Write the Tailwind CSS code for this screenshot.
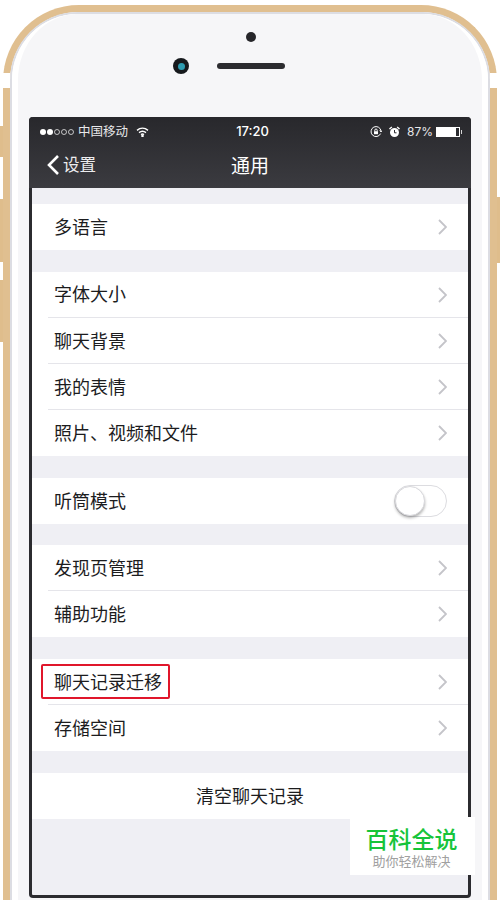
<!DOCTYPE html>
<html lang="zh-CN">
<head>
  <meta charset="UTF-8" />
  <title>通用</title>
  <script src="https://cdn.jsdelivr.net/npm/@tailwindcss/browser@4"></script>
</head>
<body class="bg-white">
<div class="relative w-[500px] h-[900px] overflow-hidden bg-white pt-[5px] px-[3px] font-['Noto_Sans_CJK_SC',sans-serif] text-[#1c1c1e]">

  <!-- side buttons -->
  <div class="absolute left-0 top-[126px] w-[3px] h-[31px] bg-[#dfbd8c]"></div>
  <div class="absolute left-0 top-[199px] w-[3px] h-[63px] bg-[#dfbd8c]"></div>
  <div class="absolute left-0 top-[280px] w-[3px] h-[62px] bg-[#dfbd8c]"></div>
  <div class="absolute right-0 top-[197px] w-[3px] h-[66px] bg-[#dfbd8c]"></div>
  <!-- antenna gaps -->
  <div class="absolute left-[3px] top-[73px] w-[7px] h-[15px] bg-white"></div>
  <div class="absolute right-[3px] top-[73px] w-[7px] h-[15px] bg-white"></div>

  <!-- phone shell -->
  <div class="h-[895px] border-[7px] border-b-0 border-[#e0bf90] rounded-t-[76px]">
    <div class="h-full border-2 border-b-0 border-[#dcdde3] rounded-t-[68px]">
      <div class="h-full border-x-[6px] border-white bg-[#f6f6f8] rounded-t-[66px] px-[11px]">

        <!-- earpiece -->
        <div class="h-[103px] pl-[2px] flex flex-col items-center">
          <div class="mt-[18px] w-[10px] h-[10px] rounded-full bg-[#26262a]"></div>
          <div class="relative mt-[21px] w-[68px] h-[6px] rounded-full bg-[#2c2c30]">
            <div class="absolute left-[-44px] top-[-5px] w-[16px] h-[16px] rounded-full bg-[#16191d] flex items-center justify-center">
              <div class="w-[7px] h-[7px] rounded-full bg-[#2d9bb0]"></div>
            </div>
          </div>
        </div>

        <!-- screen -->
        <div class="h-[781px] border-[3px] border-t-0 border-[#2b2b2f] rounded-[4px] bg-[#efeff4]">

          <!-- header -->
          <div class="h-[71px] -mx-[3px] rounded-t-[4px] bg-gradient-to-b from-[#28282c] to-[#3b3b40] text-white">
            <div class="h-[28px] pt-[1px] grid grid-cols-3 items-center pl-[11px] pr-[9px]">
              <div class="flex items-center">
                <div class="flex gap-[1px]">
                  <span class="w-[6px] h-[6px] rounded-full bg-white"></span>
                  <span class="w-[6px] h-[6px] rounded-full bg-white"></span>
                  <span class="w-[6px] h-[6px] rounded-full border border-white/70"></span>
                  <span class="w-[6px] h-[6px] rounded-full border border-white/70"></span>
                  <span class="w-[6px] h-[6px] rounded-full border border-white/70"></span>
                </div>
                <span class="ml-[4px] text-[12.5px] leading-none whitespace-nowrap text-[#e8e8ea]">中国移动</span>
                <svg class="ml-[8px] shrink-0" width="13" height="10" viewBox="0 0 13 10" fill="none" stroke="#fff" stroke-width="1.4">
                  <path d="M1 3.4C4.3.6 8.7.6 12 3.4" />
                  <path d="M3 5.6c2.1-1.7 4.9-1.7 7 0" />
                  <path d="M5 7.6c.9-.7 2.1-.7 3 0" />
                  <circle cx="6.5" cy="9" r=".6" fill="#fff" />
                </svg>
              </div>
              <div class="text-center text-[13px] leading-none font-medium pl-[3px] font-['Inter',sans-serif]">17:20</div>
              <div class="flex items-center justify-end">
                <svg width="12" height="12" viewBox="0 0 12 12" fill="none" stroke="#fff" stroke-width="1">
                  <path d="M10.6 7.6A5 5 0 1 1 11 5" />
                  <path d="M9.8 4.4 11 6l1-1.4" />
                  <rect x="4" y="5.2" width="4" height="3" fill="#fff" stroke="none" />
                  <path d="M4.8 5.2V4.2a1.2 1.2 0 0 1 2.4 0v1" />
                </svg>
                <svg class="ml-[7px]" width="11" height="12" viewBox="0 0 11 12" fill="#fff">
                  <circle cx="5.5" cy="6.5" r="4.5" />
                  <path d="M0 2.6 2.4.6l.9 1-2.4 2zM11 2.6 8.6.6l-.9 1 2.4 2z" />
                  <path d="M5.5 4v2.8h2" stroke="#2b2b2f" fill="none" />
                </svg>
                <span class="ml-[7px] text-[12px] leading-none text-[#e8e8ea] font-['Inter',sans-serif]">87%</span>
                <div class="ml-[3px] w-[24px] h-[10px] border border-white/80 bg-white flex">
                  <div class="ml-auto w-[3px] bg-[#2b2b2f]"></div>
                </div>
                <div class="w-[1px] h-[4px] ml-[1px] bg-white/80"></div>
              </div>
            </div>
            <div class="grid grid-cols-3 h-[43px] pb-[4px] items-center pl-[17px]">
              <div class="flex items-center">
                <svg width="14" height="22" viewBox="0 0 14 22" fill="none" stroke="#fff" stroke-width="2.6">
                  <path d="M12 2 3 11l9 9" />
                </svg>
                <span class="ml-[3px] text-[16.5px] leading-none text-[#ececee]">设置</span>
              </div>
              <div class="text-center text-[19px] leading-none pr-[17px]">通用</div>
            </div>
          </div>

          <!-- settings list -->
          <div class="bg-white mt-[16px] h-[46px] flex items-center justify-between pl-[22px] pr-[21px] text-[18px]">
            <span class="mb-[2px]">多语言</span>
            <svg width="9" height="16" viewBox="0 0 9 16" fill="none" stroke="#c4c4c9" stroke-width="1.8"><path d="M1 1l7 7-7 7" /></svg>
          </div>

          <div class="bg-white mt-[22px] text-[18px]">
            <div class="ml-4 h-[46px] border-b border-[#e5e5ea] flex items-center justify-between pl-[6px] pr-[21px]">
              <span class="mb-[2px]">字体大小</span>
              <svg width="9" height="16" viewBox="0 0 9 16" fill="none" stroke="#c4c4c9" stroke-width="1.8"><path d="M1 1l7 7-7 7" /></svg>
            </div>
            <div class="ml-4 h-[46px] border-b border-[#e5e5ea] flex items-center justify-between pl-[6px] pr-[21px]">
              <span class="mb-[1px]">聊天背景</span>
              <svg width="9" height="16" viewBox="0 0 9 16" fill="none" stroke="#c4c4c9" stroke-width="1.8"><path d="M1 1l7 7-7 7" /></svg>
            </div>
            <div class="ml-4 h-[46px] border-b border-[#e5e5ea] flex items-center justify-between pl-[6px] pr-[21px]">
              <span class="mb-[1px]">我的表情</span>
              <svg width="9" height="16" viewBox="0 0 9 16" fill="none" stroke="#c4c4c9" stroke-width="1.8"><path d="M1 1l7 7-7 7" /></svg>
            </div>
            <div class="ml-4 h-[46px] flex items-center justify-between pl-[6px] pr-[21px]">
              <span class="mb-[2px]">照片、视频和文件</span>
              <svg width="9" height="16" viewBox="0 0 9 16" fill="none" stroke="#c4c4c9" stroke-width="1.8"><path d="M1 1l7 7-7 7" /></svg>
            </div>
          </div>

          <div class="bg-white mt-[22px] h-[46px] flex items-center justify-between pl-[22px] pr-[21px] text-[18px]">
            <span class="mb-[2px]">听筒模式</span>
            <div class="w-[53px] h-[32px] rounded-full border border-[#dcdce0] bg-white">
              <div class="w-[30px] h-[30px] rounded-full bg-white border border-[#d8d8dc] shadow-[0_2px_3px_rgba(0,0,0,0.3)]"></div>
            </div>
          </div>

          <div class="bg-white mt-[21px] text-[18px]">
            <div class="ml-4 h-[46px] border-b border-[#e5e5ea] flex items-center justify-between pl-[6px] pr-[21px]">
              <span class="mb-[1px]">发现页管理</span>
              <svg width="9" height="16" viewBox="0 0 9 16" fill="none" stroke="#c4c4c9" stroke-width="1.8"><path d="M1 1l7 7-7 7" /></svg>
            </div>
            <div class="ml-4 h-[46px] flex items-center justify-between pl-[6px] pr-[21px]">
              <span class="mb-[2px]">辅助功能</span>
              <svg width="9" height="16" viewBox="0 0 9 16" fill="none" stroke="#c4c4c9" stroke-width="1.8"><path d="M1 1l7 7-7 7" /></svg>
            </div>
          </div>

          <div class="bg-white mt-[22px] text-[18px]">
            <div class="relative ml-4 h-[46px] border-b border-[#e5e5ea] flex items-center justify-between pl-[6px] pr-[21px]">
              <span class="mb-[1px]">聊天记录迁移</span>
              <svg width="9" height="16" viewBox="0 0 9 16" fill="none" stroke="#c4c4c9" stroke-width="1.8"><path d="M1 1l7 7-7 7" /></svg>
              <div class="absolute left-[-7px] top-[5px] w-[129px] h-[35px] border-2 border-[#e0162b] rounded-[2px]"></div>
            </div>
            <div class="ml-4 h-[46px] flex items-center justify-between pl-[6px] pr-[21px]">
              <span class="mb-[2px]">存储空间</span>
              <svg width="9" height="16" viewBox="0 0 9 16" fill="none" stroke="#c4c4c9" stroke-width="1.8"><path d="M1 1l7 7-7 7" /></svg>
            </div>
          </div>

          <div class="bg-white mt-[22px] h-[46px] flex items-center justify-center text-[18px]">
            <span class="mb-[2px]">清空聊天记录</span>
          </div>
        </div>
      </div>
    </div>
  </div>

  <!-- watermark -->
  <div class="absolute left-[350px] top-[817px] w-[125px] h-[58px] bg-white flex flex-col items-center pt-[8px] pr-[2px]">
    <div class="text-[23px] leading-[26px] font-medium text-[#16c43a]">百科全说</div>
    <div class="mt-[3px] text-[13px] leading-[14px] text-[#a0a0a0]">助你轻松解决</div>
  </div>
</div>
</body>
</html>
